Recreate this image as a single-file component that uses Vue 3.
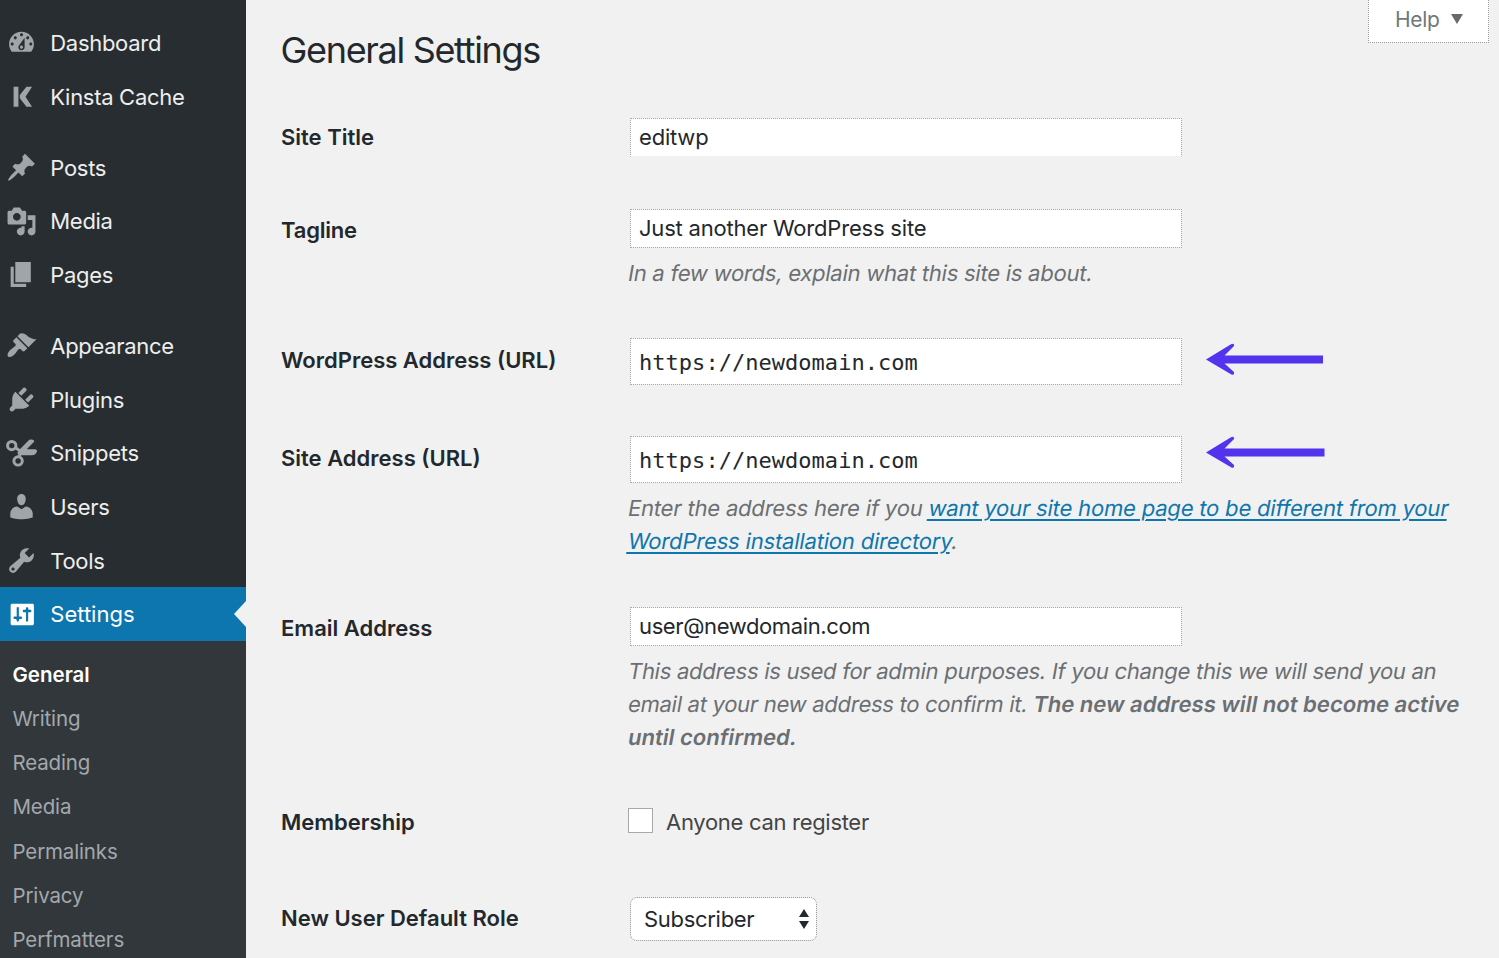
<script setup>
const menu = [
  { name: 'Dashboard', d: 'M3.76 16h12.48c1.1-1.37 1.76-3.11 1.76-5 0-4.42-3.58-8-8-8s-8 3.58-8 8c0 1.89.66 3.63 1.76 5zM10 4c.55 0 1 .45 1 1s-.45 1-1 1-1-.45-1-1 .45-1 1-1zM6 6c.55 0 1 .45 1 1s-.45 1-1 1-1-.45-1-1 .45-1 1-1zm8 0c.55 0 1 .45 1 1s-.45 1-1 1-1-.45-1-1 .45-1 1-1zm-5.37 5.55L12 7v6c0 1.1-.9 2-2 2s-2-.9-2-2c0-.57.24-1.08.63-1.45zM4 10c.55 0 1 .45 1 1s-.45 1-1 1-1-.45-1-1 .45-1 1-1zm12 0c.55 0 1 .45 1 1s-.45 1-1 1-1-.45-1-1 .45-1 1-1zm-5 3c0-.55-.45-1-1-1s-1 .45-1 1 .45 1 1 1 1-.45 1-1z' },
  { name: 'Kinsta Cache', d: 'M4.900 3.700H8v12.900H4.900zM13.200 3.700h3.600L12.600 10.150l4.200 6.450h-3.600L8.900 11.200V9.100z' },
  { name: 'Posts', gap: true, d: 'M10.44 3.02l1.82-1.82 6.36 6.35-1.83 1.82c-1.05-.68-2.48-.57-3.41.36l-.75.75c-.92.93-1.04 2.35-.35 3.41l-1.83 1.82-2.41-2.41-2.8 2.79c-.42.42-3.38 2.71-3.8 2.29s1.86-3.39 2.28-3.81l2.79-2.79L4.1 9.36l1.83-1.82c1.05.69 2.48.57 3.4-.36l.75-.75c.93-.92 1.05-2.35.36-3.41z' },
  { name: 'Media', d: 'M13 11V4c0-.55-.45-1-1-1h-1.67L9 1H5L3.67 3H2c-.55 0-1 .45-1 1v7c0 .55.45 1 1 1h10c.55 0 1-.45 1-1zM7 4.5c1.38 0 2.5 1.12 2.5 2.5S8.38 9.5 7 9.5 4.5 8.38 4.5 7 5.62 4.5 7 4.5zM14 6h5v10.5c0 1.38-1.12 2.5-2.5 2.5S14 17.88 14 16.5s1.12-2.5 2.5-2.5c.17 0 .34.02.5.05V9h-3V6zm-4 8.05V13h2v3.5c0 1.38-1.12 2.5-2.5 2.5S7 17.88 7 16.5 8.12 14 9.5 14c.17 0 .34.02.5.05z' },
  { name: 'Pages', d: 'M6 15V2h10v13H6zm-1 1h8v2H3V5h2v11z' },
  { name: 'Appearance', gap: true, d: 'M14.48 11.06L7.41 3.99l1.5-1.5c.5-.56 2.3-.47 3.51.32 1.21.8 1.43 1.28 2.91 2.1 1.18.64 2.45 1.26 4.45.85zm-.71.71L6.7 4.7 4.93 6.47c-.39.39-.39 1.02 0 1.41l1.06 1.06c.39.39.39 1.03 0 1.42-.6.6-1.43 1.11-2.21 1.69-.35.26-.7.53-1.01.84C1.43 14.23.4 16.08 1.4 17.07c.99 1 2.84-.03 4.18-1.36.31-.31.58-.66.85-1.02.57-.78 1.08-1.61 1.69-2.21.39-.39 1.02-.39 1.41 0l1.06 1.06c.39.39 1.02.39 1.41 0z' },
  { name: 'Plugins', d: 'M13.11 4.36L9.87 7.6 8 5.73l3.24-3.24c.35-.34 1.05-.2 1.56.32.52.51.66 1.21.31 1.55zm-8 1.77l.91-1.12 9.01 9.01-1.19.84c-.71.71-2.63 1.16-3.82 1.16H6.14L4.9 17.26c-.59.59-1.54.59-2.12 0-.59-.58-.59-1.53 0-2.12l1.24-1.24v-3.88c0-1.13.4-3.19 1.09-3.89zm7.26 3.97l3.24-3.24c.34-.35 1.04-.21 1.55.31.52.51.66 1.21.31 1.55l-3.24 3.25z' },
  { name: 'Snippets', d: 'M8 8.300l6.200-6.400c1.200-1.200 2.900-1.200 3.800-.3.300.4.200.8-.2 1.200L13.400 7.200h5.200c1.200 0 1.700.8 1.300 1.700-.6 1.600-1.700 2.200-3.300 2.200H9.500L7.300 10z', s: 'M6.400 6.500L10 9M8.400 12L9.700 9', rings: [[3.700, 4.900], [7.800, 14.800]] },
  { name: 'Users', d: 'M10 9.25c-2.27 0-2.73-3.44-2.73-3.44C7 4.02 7.82 2 9.97 2c2.16 0 2.98 2.02 2.71 3.81 0 0-.41 3.44-2.68 3.44zm0 2.57L12.72 10c2.39 0 4.52 2.33 4.52 4.53v2.49s-3.65 1.13-7.24 1.13c-3.65 0-7.24-1.13-7.24-1.13v-2.49c0-2.25 1.94-4.48 4.47-4.48z' },
  { name: 'Tools', d: 'M16.68 9.77c-1.34 1.34-3.3 1.67-4.95.99l-5.41 6.52c-.99.99-2.59.99-3.58 0s-.99-2.59 0-3.57l6.52-5.42c-.68-1.65-.35-3.61.99-4.95 1.28-1.28 3.12-1.62 4.72-1.06l-2.89 2.89 2.82 2.82 2.86-2.87c.53 1.58.18 3.39-1.08 4.65zM3.81 16.21c.4.39 1.04.39 1.43 0 .4-.4.4-1.04 0-1.43-.39-.4-1.03-.4-1.43 0-.39.39-.39 1.03 0 1.43z' },
  { name: 'Settings', active: true, d: 'M18 16V4c0-.55-.45-1-1-1H4c-.55 0-1 .45-1 1v12c0 .55.45 1 1 1h13c.55 0 1-.45 1-1zM8.300 11.300h1.200c.5 0 .9.35.9.8s-.4.8-.9.8H8.600l-.5 1.600h-1l-.5-1.600h-.9c-.5 0-.9-.35-.9-.8s.4-.8.9-.8h1.200V5.300h1.400zM12.900 8.500h-1.200c-.5 0-.9-.35-.9-.8s.4-.8.9-.8h.9l.5-1.600h1l.5 1.600h.9c.5 0 .9.35.9.8s-.4.8-.9.8h-1.200v6h-1.400z' },
]
const submenu = ['General', 'Writing', 'Reading', 'Media', 'Permalinks', 'Privacy', 'Perfmatters']
</script>

<template>
  <div class="screen">
    <nav class="sidebar">
      <ul class="menu">
        <li v-for="m in menu" :key="m.name" :class="{ gap: m.gap, active: m.active }">
          <svg class="icon" viewBox="0 0 20 20">
            <path fill-rule="evenodd" :d="m.d" />
            <path v-if="m.s" class="stroke" :d="m.s" />
            <circle v-for="r in m.rings" :key="r[0]" class="stroke" :cx="r[0]" :cy="r[1]" r="2.700" />
          </svg>
          <span>{{ m.name }}</span>
        </li>
      </ul>
      <ul class="submenu">
        <li v-for="(s, i) in submenu" :key="s" :class="{ current: i === 0 }">{{ s }}</li>
      </ul>
    </nav>

    <main class="content">
      <button class="help">Help <i class="caret"></i></button>
      <h1>General Settings</h1>
      <div class="form">
        <div class="row r-title">
          <label>Site Title</label>
          <div class="field"><div class="input open">editwp</div></div>
        </div>
        <div class="row r-tag">
          <label>Tagline</label>
          <div class="field">
            <div class="input">Just another WordPress site</div>
            <p><span>In a few words, explain what this site is about.</span></p>
          </div>
        </div>
        <div class="row r-wp">
          <label>WordPress Address (URL)</label>
          <div class="field line">
            <div class="input code">https://newdomain.com</div>
            <svg class="arrow" viewBox="0 0 120 34"><path d="M0 17.500L25 2.300Q28.500.5 28 4L18.500 13.500H117v8H18.500L28 30Q28.500 34 25 32.300z" /></svg>
          </div>
        </div>
        <div class="row r-site">
          <label>Site Address (URL)</label>
          <div class="field">
            <div class="line">
              <div class="input code">https://newdomain.com</div>
              <svg class="arrow second" viewBox="0 0 120 34"><path d="M0 17.500L25 2.300Q28.500.5 28 4L18.500 13.500H118.500v8H18.500L28 30Q28.500 34 25 32.300z" /></svg>
            </div>
            <p class="site-help">
              <span>Enter the address here if you <a>want your site home page to be different from your</a></span>
              <span><a>WordPress installation directory</a>.</span>
            </p>
          </div>
        </div>
        <div class="row r-mail">
          <label>Email Address</label>
          <div class="field">
            <div class="input mail">user@newdomain.com</div>
            <p class="mail-help">
              <span>This address is used for admin purposes. If you change this we will send you an</span>
              <span>email at your new address to confirm it. <b>The new address will not become active</b></span>
              <span><b>until confirmed.</b></span>
            </p>
          </div>
        </div>
        <div class="row r-member">
          <label>Membership</label>
          <div class="field check"><i class="box"></i><span>Anyone can register</span></div>
        </div>
        <div class="row r-role">
          <label>New User Default Role</label>
          <div class="field">
            <div class="select">
              <span>Subscriber</span>
              <svg viewBox="0 0 10 20"><path d="M5 0l5 8H0zM0 12h10l-5 8z" /></svg>
            </div>
          </div>
        </div>
      </div>
    </main>
  </div>
</template>

<style>
body { margin: 0; overflow: hidden; }
</style>

<style scoped>
* { box-sizing: border-box; }
.screen { display: flex; width: 1499px; height: 958px; overflow: hidden; background: #f1f1f1; font: 22px/33px Inter, "Liberation Sans", sans-serif; color: #23282d; }
ul { list-style: none; margin: 0; padding: 0; }
.sidebar { display: flex; flex-direction: column; width: 246px; height: 958px; flex: none; background: #282d31; }
.menu { padding-top: 16px; }
.menu li { position: relative; display: flex; align-items: center; height: 53.65px; padding-left: 6px; gap: 13.300px; color: #eee; white-space: nowrap; letter-spacing: -.3px; }
.menu li span { padding-top: 1.400px; }
.menu li.gap { margin-top: 17.400px; }
.icon { width: 31px; height: 31px; flex: none; fill: #a0a5aa; overflow: visible; }
.icon .stroke { fill: none; stroke: #a0a5aa; stroke-width: 1.900; }
.menu li.active { background: #0e76ae; color: #fff; letter-spacing: 0; }
.menu li.active span { padding-top: 0; }
.menu li.active .icon { fill: #fff; }
.menu li.active::after { content: ""; position: absolute; right: 0; top: 50%; margin-top: -13px; border: 13px solid transparent; border-left: 0; border-right: 12px solid #f1f1f1; }
.submenu { flex: 1; padding: 12px 0 0 12.500px; background: #32373c; font-size: 20.500px; color: #a3a8ac; letter-spacing: -.15px; }
.submenu li { height: 44.200px; line-height: 44.200px; }
.submenu .current { color: #fff; font-weight: 600; letter-spacing: 0; }

.content { position: relative; flex: 1; padding-left: 35px; }
h1 { margin: 0; padding-top: 27px; height: 118px; font-size: 36px; font-weight: 400; line-height: 46px; letter-spacing: -1.320px; text-indent: -.5px; }
.help { position: absolute; right: 10px; top: -2px; display: flex; align-items: center; width: 121px; height: 45px; padding: 0 0 2px 26px; gap: 11px; border: 1px dotted #999; background: #fff; color: #72777c; font: 21px Inter, sans-serif; letter-spacing: -.3px; }
.caret { border: 6.500px solid transparent; border-top: 10px solid #666b70; border-bottom: 0; margin-top: -1px; }
.row { display: flex; align-items: flex-start; }
.row label { width: 347px; flex: none; font-weight: 600; white-space: nowrap; }
.field { flex: 1; white-space: nowrap; }
.r-title { height: 91px; } .r-title label { padding-top: 3px; }
.r-tag { height: 129px; } .r-tag label { padding-top: 5px; letter-spacing: -.2px; }
.r-wp { height: 98px; } .r-wp label { padding-top: 6px; }
.r-site { height: 171px; } .r-site label { padding-top: 6px; }
.r-mail { height: 201px; } .r-mail label { padding-top: 5px; }
.r-member { height: 89px; } .r-member label { line-height: 29px; }
.r-role label { padding-top: 5px; }
.input { width: 552px; height: 39px; margin-left: 2px; padding-left: 8px; border: 1px dotted #aaa; background: #fff; background-clip: padding-box; line-height: 37px; flex: none; letter-spacing: -.2px; }
.input.mail { letter-spacing: -.38px; }
.input.open { border-bottom-color: transparent; }
.input.code { height: 47px; line-height: 48px; font-family: "DejaVu Sans Mono", monospace; letter-spacing: .03px; }
.line { display: flex; }
.arrow { width: 120px; height: 34px; margin: 4px 0 0 24px; fill: #5333ed; }
.arrow.second { margin-top: -1px; }
p { margin: 0 0 0 -1px; padding-top: 9px; color: #6b6f73; letter-spacing: -.24px; }
p.site-help { letter-spacing: -.18px; }
p.mail-help { letter-spacing: -.275px; }
p span { display: block; width: max-content; transform: skewX(-10deg); transform-origin: 0 72%; }
a { color: #0e76ae; text-decoration: underline; text-decoration-thickness: 1.500px; text-underline-offset: 3px; }
b { font-weight: 600; letter-spacing: .03px; }
.check { display: flex; gap: 13px; color: #444; line-height: 29px; letter-spacing: -.3px; }
.box { width: 25px; height: 25px; border: 1px solid #a5aaae; background: #fff; }
.select { display: flex; align-items: center; justify-content: space-between; width: 187px; height: 44px; margin-left: 2px; padding: 0 7px 0 13px; border: 1px dotted #999; border-radius: 7px; background: #fff; background-clip: padding-box; letter-spacing: -.3px; }
.select svg { width: 10px; height: 20px; fill: #23282d; }
</style>
